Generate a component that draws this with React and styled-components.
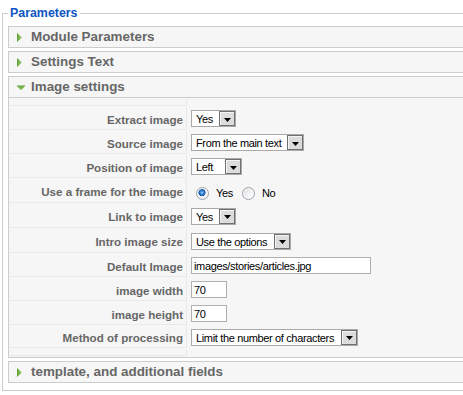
import React from 'react';
import styled, { createGlobalStyle } from 'styled-components';

const Global = createGlobalStyle`
  html, body { margin: 0; padding: 0; background: #fff; overflow: hidden; }
  body { font-family: "Liberation Sans", Arial, sans-serif; }
`;

const Page = styled.div`
  width: 463px;
  height: 395px;
  overflow: hidden;
`;

const Fieldset = styled.fieldset`
  margin: 6px 0 0 2px;
  padding: 5px 0 4px 5px;
  width: 480px;
  box-sizing: border-box;
  border: 1px solid #ccc;
  min-inline-size: 0;
`;

const Legend = styled.legend`
  padding: 0 2px;
  font: bold 12.4px/15px "Liberation Sans", Arial, sans-serif;
  color: #0b55c4;
`;

const Panel = styled.div`
  border: 1px solid #ccc;
  margin-bottom: 3px;
  background: #f6f6f6;
`;

const Toggler = styled.h3`
  margin: 0;
  height: 20px;
  display: flex;
  align-items: stretch;
  gap: 5px;
  padding-left: 7px;
  border-bottom: ${p => (p.$open ? '1px solid #ccc' : 'none')};
  font: bold 13.4px/20px "Liberation Sans", Arial, sans-serif;
  color: #666;
  background: #f6f6f6;
`;

const ArrowSvg = styled.svg`
  flex: none;
  display: block;
`;

const Content = styled.div`
  padding: 1px;
  display: flex;
  flex-direction: column;
  gap: 1px;
`;

const Row = styled.div`
  display: flex;
  gap: 1px;
  height: ${p => p.$h}px;
`;

const Key = styled.div`
  flex: none;
  width: 177px;
  box-sizing: border-box;
  border-right: 1px solid #e9e9e9;
  border-bottom: 1px solid #e9e9e9;
  background: #f6f6f6;
  display: flex;
  align-items: center;
  justify-content: flex-end;
  padding: 2px 3px 0 0;
  font: bold 11.6px "Liberation Sans", Arial, sans-serif;
  color: #666;
  white-space: nowrap;
`;

const Value = styled.div`
  flex: 1;
  display: flex;
  align-items: center;
  padding-left: 3px;
`;

const ctrlFont = `
  font-family: "Liberation Sans", Arial, sans-serif;
  font-size: 11px;
  letter-spacing: -0.35px;
  color: #000;
`;

const SelectBox = styled.div`
  width: ${p => p.$w}px;
  height: 17px;
  box-sizing: border-box;
  border: 1px solid #a9a9a9;
  background: #fff;
  display: flex;
`;

const SelectText = styled.span`
  flex: 1;
  padding: 1px 0 0 4px;
  line-height: 14px;
  white-space: nowrap;
  overflow: hidden;
  ${ctrlFont}
`;

const DropButton = styled.span`
  flex: none;
  width: 16px;
  box-sizing: border-box;
  border: 1px solid #707070;
  background: #dcdcdc;
  box-shadow: inset 1px 1px 0 #f4f4f4;
  display: flex;
  align-items: center;
  justify-content: center;
  padding-top: 2px;
`;

const TextInput = styled.div`
  width: ${p => p.$w}px;
  height: 17px;
  box-sizing: border-box;
  border: 1px solid #b0b0b0;
  background: #fff;
  padding: 1px 0 0 2px;
  line-height: 14px;
  white-space: nowrap;
  ${ctrlFont}
`;

const RadioGroup = styled.div`
  display: flex;
  align-items: center;
  margin-top: 5px;
  padding-left: 5px;
`;

const Radio = styled.span`
  flex: none;
  width: 13px;
  height: 13px;
  box-sizing: border-box;
  border-radius: 50%;
  border: 1px solid #9aa3ab;
  background: ${p =>
    p.$checked
      ? 'radial-gradient(circle at 45% 42%, #a9dcff 0, #3a8fdc 1.5px, #14539f 3.3px, #f7f7f7 3.9px, #eaeaea 5.5px)'
      : 'linear-gradient(135deg, #d9d9d9 0%, #f4f4f4 55%, #ffffff 100%)'};
  box-shadow: inset 0 0 0 1px #f8f8f8;
`;

const RadioLabel = styled.span`
  margin: 0 9px 0 7px;
  line-height: 13px;
  ${ctrlFont}
`;

const Arrow = ({ open }) => (
  <ArrowSvg width="10" height="20" viewBox="0 0 10 20">
    <defs>
      <linearGradient id={open ? 'gd' : 'gr'} x1="0" y1="0" x2={open ? '0' : '1'} y2={open ? '1' : '0'}>
        <stop offset="0" stopColor="#5f9f34" />
        <stop offset="1" stopColor="#a6d27a" />
      </linearGradient>
    </defs>
    {open ? (
      <polygon points="0.5,8.5 9.5,8.5 5,13.5" fill="url(#gd)" />
    ) : (
      <polygon points="1,6 6,10.5 1,15" fill="url(#gr)" />
    )}
  </ArrowSvg>
);

const Select = ({ w, children }) => (
  <SelectBox $w={w}>
    <SelectText>{children}</SelectText>
    <DropButton>
      <svg width="7" height="4" viewBox="0 0 7 4">
        <polygon points="0,0 7,0 3.5,4" fill="#000" />
      </svg>
    </DropButton>
  </SelectBox>
);

const PanelBlock = ({ title, open, children }) => (
  <Panel>
    <Toggler $open={open}>
      <Arrow open={open} />
      <span>{title}</span>
    </Toggler>
    {open && children}
  </Panel>
);

const rows = [
  { label: 'Extract image', h: 23, ctrl: <Select w={45}>Yes</Select> },
  { label: 'Source image', h: 23, ctrl: <Select w={113}>From the main text</Select> },
  { label: 'Position of image', h: 23, ctrl: <Select w={51}>Left</Select> },
  {
    label: 'Use a frame for the image',
    h: 24,
    ctrl: (
      <RadioGroup>
        <Radio $checked />
        <RadioLabel>Yes</RadioLabel>
        <Radio />
        <RadioLabel>No</RadioLabel>
      </RadioGroup>
    ),
  },
  { label: 'Link to image', h: 24, ctrl: <Select w={45}>Yes</Select> },
  { label: 'Intro image size', h: 24, ctrl: <Select w={100}>Use the options</Select> },
  { label: 'Default Image', h: 23, ctrl: <TextInput $w={180}>images/stories/articles.jpg</TextInput> },
  { label: 'image width', h: 23, ctrl: <TextInput $w={36}>70</TextInput> },
  { label: 'image height', h: 23, ctrl: <TextInput $w={36}>70</TextInput> },
  { label: 'Method of processing', h: 22, ctrl: <Select w={167}>Limit the number of characters</Select> },
];

export default function App() {
  return (
    <>
      <Global />
      <Page>
        <Fieldset>
          <Legend>Parameters</Legend>
          <PanelBlock title="Module Parameters" />
          <PanelBlock title="Settings Text" />
          <PanelBlock title="Image settings" open>
            <Content>
              <Row $h={7}>
                <Key />
                <Value />
              </Row>
              {rows.map(r => (
                <Row key={r.label} $h={r.h}>
                  <Key>{r.label}</Key>
                  <Value>{r.ctrl}</Value>
                </Row>
              ))}
              <Row $h={7}>
                <Key />
                <Value />
              </Row>
            </Content>
          </PanelBlock>
          <PanelBlock title="template, and additional fields" />
        </Fieldset>
      </Page>
    </>
  );
}
